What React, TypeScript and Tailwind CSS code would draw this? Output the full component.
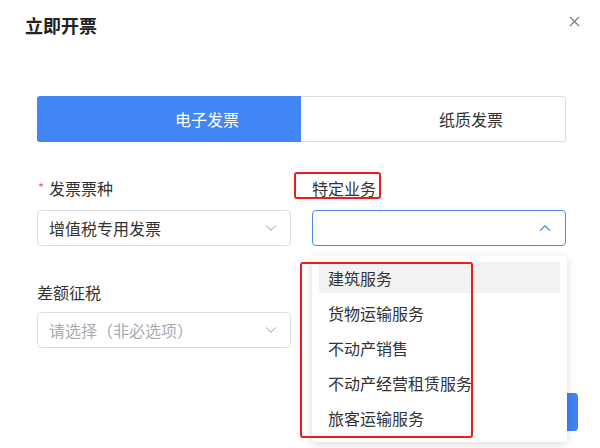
import { ChevronDown, ChevronUp, X } from 'lucide-react';

const font = { fontFamily: '"Noto Sans CJK SC", "Noto Sans", sans-serif' };

const options = ['建筑服务', '货物运输服务', '不动产销售', '不动产经营租赁服务', '旅客运输服务'];

export default function App() {
    return (
        <div className="relative w-[600px] h-[448px] overflow-hidden bg-white text-[#333]" style={font}>
            {/* Header */}
            <div className="flex items-start justify-between pl-[25px] pr-[17px] pt-[14px]">
                <h1 className="text-[18px] leading-[22px] font-bold text-[#222]">立即开票</h1>
                <X className="w-[17px] h-[17px] text-[#777] mt-[-1px]" strokeWidth={1.5} />
            </div>

            <div className="pl-[37px] pr-[34px] pt-[60px]">
                {/* Tabs */}
                <div className="flex h-[46px]">
                    <div className="flex-1 flex items-center justify-center pl-[76px] bg-[#4285f4] text-white text-[16px] rounded-l-[3px]">
                        电子发票
                    </div>
                    <div className="flex-1 flex items-center justify-center pl-[76px] border border-l-0 border-[#dcdfe6] text-[16px] text-[#333] rounded-r-[3px]">
                        纸质发票
                    </div>
                </div>

                {/* Form */}
                <div className="grid grid-cols-2 gap-x-[21px] pt-[35px]">
                    <div>
                        <div className="flex items-center h-[22px] text-[16px] leading-[22px]">
                            <span className="text-[#f56c6c] text-[13px] mr-[5px] ml-[1px]">*</span>
                            <span>发票票种</span>
                        </div>
                        <div className="mt-[11px] h-[36px] flex items-center justify-between pl-[11px] pr-[10px] border border-[#dcdfe6] rounded-[4px] text-[16px]">
                            <span>增值税专用发票</span>
                            <ChevronDown className="w-[18px] h-[18px] text-[#a8abb2]" strokeWidth={1.4} />
                        </div>
                    </div>
                    <div>
                        <div className="h-[22px] text-[16px] leading-[22px]">特定业务</div>
                        <div className="mt-[11px] h-[36px] flex items-center justify-end pr-[11px] border border-[#4f87ee] rounded-[4px]">
                            <ChevronUp className="w-[18px] h-[18px] text-[#5a8ded]" strokeWidth={1.6} />
                        </div>
                    </div>
                    <div className="pt-[35px]">
                        <div className="h-[22px] text-[16px] leading-[22px]">差额征税</div>
                        <div className="mt-[9px] h-[36px] flex items-center justify-between pl-[11px] pr-[10px] border border-[#dcdfe6] rounded-[4px] text-[16px] text-[#a8abb2]">
                            <span>请选择（非必选项）</span>
                            <ChevronDown className="w-[18px] h-[18px] text-[#a8abb2]" strokeWidth={1.4} />
                        </div>
                    </div>
                </div>

                {/* Footer */}
                <div className="flex justify-end mt-[45px] mr-[-12px]">
                    <button className="w-[98px] h-[38px] rounded-[4px] bg-[#3f82f1] text-white text-[15px]">确定</button>
                </div>
            </div>

            {/* Dropdown */}
            <div className="absolute left-[312px] top-[256px] w-[255px] pt-[6px] pb-[9px] px-[7px] bg-white rounded-[4px] shadow-[0_2px_10px_rgba(0,0,0,0.15)] flex flex-col gap-[4px]">
                {options.map((o, i) => (
                    <div
                        key={o}
                        className={`h-[31px] flex items-center pl-[9px] text-[16px] rounded-[2px] whitespace-nowrap ${i === 0 ? 'bg-[#f2f2f2]' : ''}`}
                    >
                        {o}
                    </div>
                ))}
            </div>

            {/* Annotation boxes */}
            <div className="absolute left-[294px] top-[172px] w-[87px] h-[27px] border-[2.5px] border-[#ee1c1c] rounded-[3px]" />
            <div className="absolute left-[300px] top-[262px] w-[173px] h-[176px] border-[2.5px] border-[#ee1c1c] rounded-[3px]" />
        </div>
    );
}
